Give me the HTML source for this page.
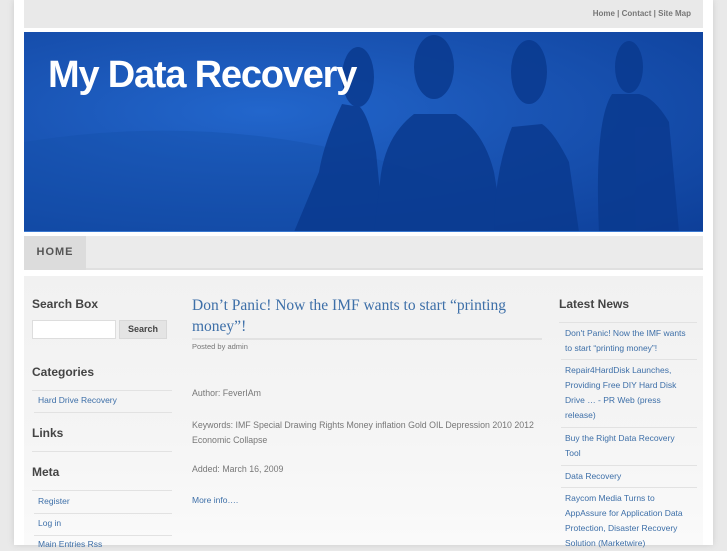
<!DOCTYPE html>
<html><head><meta charset="utf-8"><style>
*{margin:0;padding:0;box-sizing:border-box}
body{width:727px;height:545px;overflow:hidden;background:#e9e9e9;font-family:"Liberation Sans",sans-serif}
#wrap{position:absolute;left:14px;top:0;width:699px;height:545px;background:#fff;box-shadow:0 0 6px #ccc}
#top{position:absolute;left:24px;top:0;width:679px;height:28px;background:#e9e9e9}
#top span{position:absolute;right:12px;top:9px;font-size:8px;color:#777;font-weight:bold}
#ban{position:absolute;left:24px;top:32px;width:679px;height:200px;background:radial-gradient(ellipse at 35% 40%,#2266cc 0%,#1a55b5 40%,#0d3f99 100%);overflow:hidden;border-bottom:1px solid #3a78d0}
#ban h1{position:absolute;left:24px;top:22px;color:#fff;font-size:38px;font-weight:bold;letter-spacing:-1.2px}
#nav{position:absolute;left:24px;top:236px;width:679px;height:34px;background:#ebebeb;border-bottom:2px solid #e0e0e0}
#nav b{position:absolute;left:0;top:0;width:62px;height:34px;background:#dcdcdc;color:#555;font-size:11px;letter-spacing:1px;line-height:33px;text-align:center}
#main{position:absolute;left:24px;top:276px;width:679px;height:269px;background:linear-gradient(#f1f1f1,#f5f5f5 60%,#fafafa)}
h3{position:absolute;font-size:12px;color:#444;font-weight:bold}
.a{color:#3d6fa8;font-size:8.5px;position:absolute}
.ln{position:absolute;height:1px;background:#e2e2e2}
.t{position:absolute;font-size:8.8px;color:#777}
</style></head><body>
<div id="wrap"></div>
<div id="top"><span>Home | Contact | Site Map</span></div>
<div id="ban">
<svg width="679" height="200" style="position:absolute;left:0;top:0">
<path d="M0 110 Q250 70 470 170 L470 200 L0 200Z" fill="#1550aa" opacity=".4"/>
<g fill="#0a3a8f" opacity=".85">
<ellipse cx="334" cy="45" rx="16" ry="30"/><path d="M318 72 Q300 110 295 140 L270 200 L360 200 L352 120 Q345 85 336 75Z"/>
<ellipse cx="410" cy="35" rx="20" ry="32"/><path d="M390 82 Q360 105 356 150 L350 200 L480 200 L470 140 Q460 100 432 82Z"/>
<ellipse cx="505" cy="40" rx="18" ry="32"/><path d="M488 95 Q470 140 470 200 L555 200 L545 130 Q530 100 518 92Z"/>
<ellipse cx="605" cy="35" rx="14" ry="26"/><path d="M588 62 Q570 90 575 200 L655 200 L645 90 Q630 65 615 62Z"/>
</g></svg>
<h1>My Data Recovery</h1></div>
<div id="nav"><b>HOME</b></div>
<div id="main"></div>
<h3 style="left:32px;top:297px">Search Box</h3>
<div style="position:absolute;left:32px;top:320px;width:84px;height:19px;background:#fff;border:1px solid #ddd"></div>
<div style="position:absolute;left:119px;top:320px;width:48px;height:19px;background:#e4e4e4;border:1px solid #d8d8d8;font-size:9px;font-weight:bold;color:#444;text-align:center;line-height:17px">Search</div>
<h3 style="left:32px;top:365px">Categories</h3>
<div class="ln" style="left:32px;top:390px;width:140px"></div>
<div class="a" style="left:38px;top:395px">Hard Drive Recovery</div>
<div class="ln" style="left:34px;top:412px;width:138px"></div>
<h3 style="left:32px;top:426px">Links</h3>
<div class="ln" style="left:32px;top:451px;width:140px"></div>
<h3 style="left:32px;top:465px">Meta</h3>
<div class="ln" style="left:32px;top:490px;width:140px"></div>
<div class="a" style="left:38px;top:496px">Register</div>
<div class="ln" style="left:34px;top:513px;width:138px"></div>
<div class="a" style="left:38px;top:518px">Log in</div>
<div class="ln" style="left:34px;top:535px;width:138px"></div>
<div class="a" style="left:38px;top:539px">Main Entries Rss</div>
<div style="position:absolute;left:192px;top:295px;width:350px;font-family:'Liberation Serif',serif;font-size:15.5px;color:#3d6fa8;line-height:21px">Don’t Panic! Now the IMF wants to start “printing money”!</div>
<div style="position:absolute;left:192px;top:338px;width:350px;height:2px;background:#e2e2e2"></div>
<div class="t" style="left:192px;top:342px;font-size:7.5px">Posted by admin</div>
<div class="t" style="left:192px;top:388px">Author: FeverIAm</div>
<div class="t" style="left:192px;top:418px;width:350px;line-height:15px">Keywords: IMF Special Drawing Rights Money inflation Gold OIL Depression 2010 2012 Economic Collapse</div>
<div class="t" style="left:192px;top:464px">Added: March 16, 2009</div>
<div class="a" style="left:192px;top:495px">More info….</div>
<h3 style="left:559px;top:297px">Latest News</h3>
<div class="ln" style="left:559px;top:322px;width:138px"></div>
<div class="a" style="left:565px;top:326px;width:126px;line-height:15px">Don't Panic! Now the IMF wants to start “printing money”!</div>
<div class="ln" style="left:561px;top:359px;width:136px"></div>
<div class="a" style="left:565px;top:363px;width:120px;line-height:15px">Repair4HardDisk Launches, Providing Free DIY Hard Disk Drive … - PR Web (press release)</div>
<div class="ln" style="left:561px;top:427px;width:136px"></div>
<div class="a" style="left:565px;top:431px;width:120px;line-height:15px">Buy the Right Data Recovery Tool</div>
<div class="ln" style="left:561px;top:465px;width:136px"></div>
<div class="a" style="left:565px;top:469px;width:126px;line-height:15px">Data Recovery</div>
<div class="ln" style="left:561px;top:487px;width:136px"></div>
<div class="a" style="left:565px;top:491px;width:126px;line-height:15px">Raycom Media Turns to AppAssure for Application Data Protection, Disaster Recovery Solution (Marketwire)</div>
</body></html>
